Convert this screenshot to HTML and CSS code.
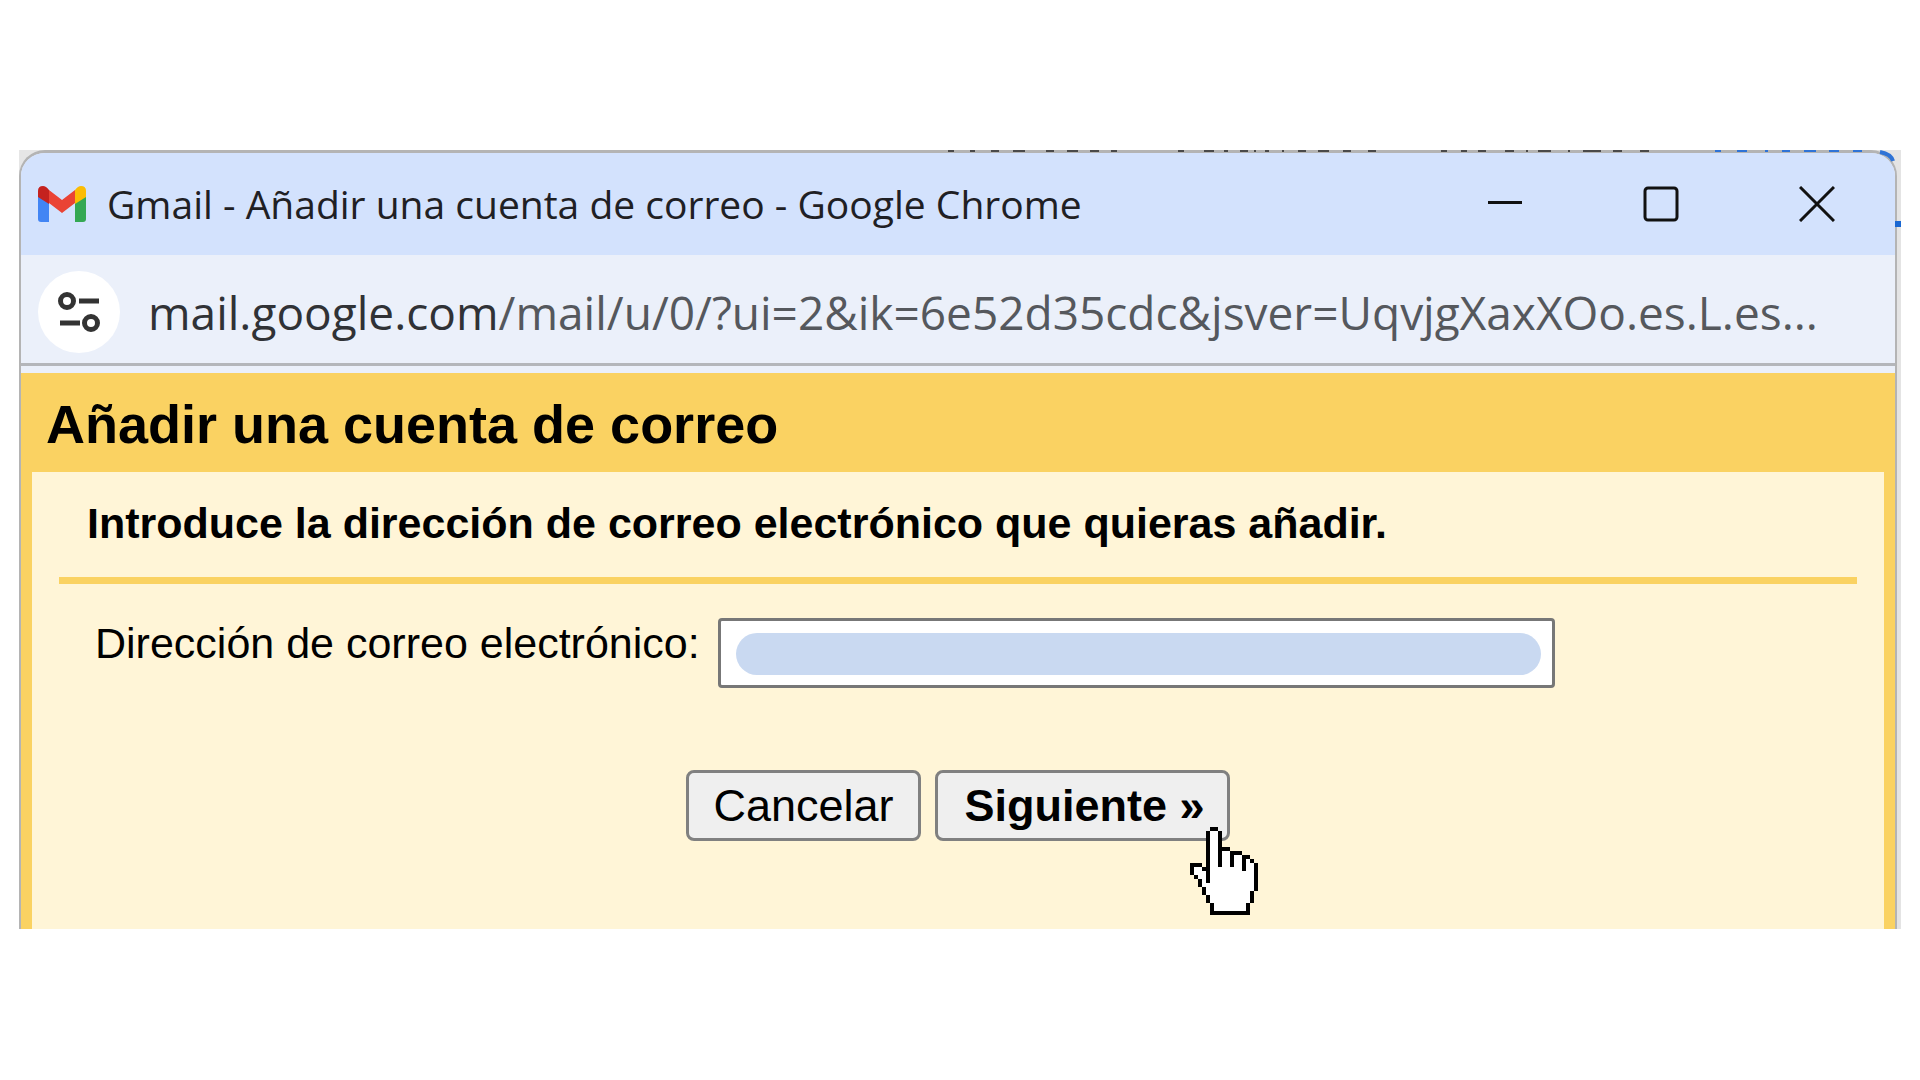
FILE: index.html
```html
<!DOCTYPE html>
<html lang="es">
<head>
<meta charset="utf-8">
<title>Gmail - Añadir una cuenta de correo</title>
<link rel="stylesheet" href="styles.css">
</head>
<body>
<div class="desktop">
  <section class="window">
    <header class="titlebar">
      <svg class="logo" viewBox="0 0 48 36" aria-hidden="true">
        <path fill="#4285f4" d="M0 9v24q0 3 3 3h8V16z"/>
        <path fill="#34a853" d="M48 9v24q0 3-3 3h-8V16z"/>
        <path fill="#ea4335" d="M11 4l13 10L37 4v13L24 27 11 17z"/>
        <path fill="#c5221f" d="M0 11V5q0-5 5-5 3 0 6 4v14z"/>
        <path fill="#fbbc04" d="M48 11V5q0-5-5-5-3 0-6 4v14z"/>
      </svg>
      <span class="caption">Gmail - Añadir una cuenta de correo - Google Chrome</span>
      <div class="controls">
        <button type="button" class="control" aria-label="Minimizar"><svg viewBox="0 0 36 36"><path d="M1 16.500h34"/></svg></button>
        <button type="button" class="control" aria-label="Maximizar"><svg viewBox="0 0 36 36"><rect x="2" y="2" width="32" height="32" rx="3"/></svg></button>
        <button type="button" class="control" aria-label="Cerrar"><svg viewBox="0 0 36 36"><path d="M1 1l34 34M35 1L1 35"/></svg></button>
      </div>
    </header>
    <div class="addressbar">
      <button type="button" class="site-info" aria-label="Información del sitio"><svg viewBox="0 0 44 42"><circle cx="10" cy="10" r="6.500"/><path d="M22 10h20M3 32h20"/><circle cx="34" cy="32" r="6.500"/></svg></button>
      <span class="url"><b>mail.google.com</b>/mail/u/0/?ui=2&amp;ik=6e52d35cdc&amp;jsver=UqvjgXaxXOo.es.L.es...</span>
    </div>
    <main class="page">
      <h1>Añadir una cuenta de correo</h1>
      <form class="panel">
        <h2>Introduce la dirección de correo electrónico que quieras añadir.</h2>
        <div class="field">
          <label for="email">Dirección de correo electrónico:</label>
          <div class="entry">
            <input id="email" type="text">
            <span class="redaction"></span>
          </div>
        </div>
        <div class="actions">
          <button type="button">Cancelar</button>
          <div class="next">
            <button type="submit">Siguiente »</button>
            <svg class="pointer" viewBox="0 0 17 22" shape-rendering="crispEdges" aria-hidden="true">
              <path fill="#fff" d="M5 1h2v5h3v1h3v1h2v1h1v7h-1v3h-1v2H6v-2H5v-2H4v-2H3v-2H2v-1H1v-2h2v1h2z"/>
              <path fill="#000" d="M5 0h2v1H5zM4 1h1v13H4zM7 1h1v9H7zM8 5h2v1H8zM10 6h3v1h-3zM10 7h1v3h-1zM13 7h2v1h-2zM13 8h1v3h-1zM15 8h1v1h-1zM16 9h1v7h-1zM15 16h1v3h-1zM14 19h1v3h-1zM5 21h10v1H5zM5 19h1v2H5zM4 17h1v2H4zM3 15h1v2H3zM2 13h1v2H2zM1 12h1v1H1zM0 9h3v1H0zM0 10h1v2H0zM3 10h1v1H3z"/>
            </svg>
          </div>
        </div>
      </form>
    </main>
  </section>
  <!-- Slivers of the settings page left uncovered along the popup's top and right edges -->
  <svg class="backdrop" viewBox="0 0 961 84" aria-hidden="true">
    <path stroke="#4a4a4a" stroke-width="2" d="M8 1h6M30 1h5M51 1h8M73 1h12M106 1h8M127 1h11M150 1h9M171 1h6M238 1h6M264 1h10M284 1h4M300 1h8M314 1h2M325 1h4M342 1h2M358 1h8M378 1h11M403 1h8M428 1h8M501 1h6M521 1h6M538 1h8M565 1h9M586 1h2M598 1h13M628 1h2M643 1h18M673 1h9M700 1h9"/>
    <path stroke="#2f73d6" stroke-width="2" d="M775 1h6M797 1h10M825 1h3M842 1h8M864 1h12M889 1h10M913 1h9"/>
    <path fill="none" stroke="#2f73d6" stroke-width="4" d="M940 2q11 2 13 9"/>
    <path stroke="#1967d2" stroke-width="6" d="M955 74h6"/>
  </svg>
</div>
</body>
</html>
```
FILE: styles.css
```css
* { box-sizing: border-box; }

body {
  margin: 0;
  padding: 150px 19px;
  background: #fff;
  color: #000;
  font-family: "Liberation Sans", Arial, sans-serif;
}

/* Strip of the Gmail settings page that shows behind the popup */
.desktop {
  position: relative;
  overflow: hidden;
  padding-right: 4px;
  background: linear-gradient(90deg, #e6e6e6 50%, #e4e4e4);
}

.backdrop {
  position: absolute;
  top: 0;
  right: 0;
  width: 961px;
  height: 84px;
  pointer-events: none;
}

.window {
  border: solid #b4b4b4;
  border-width: 3px 2px 0;
  border-radius: 26px 26px 0 0;
  overflow: hidden;
  background: #ebf0fa;
}

.titlebar {
  display: flex;
  align-items: center;
  height: 102px;
  padding: 0 60px 0 17px;
  background: #d3e2fd;
}

.logo { width: 48px; height: 36px; margin-right: 21px; }

.caption {
  flex: 1;
  color: #1f2024;
  font: 39px/52px "Open Sans", "Noto Sans", sans-serif;
  white-space: nowrap;
}

.controls { display: flex; gap: 120px; }

.control {
  width: 36px;
  height: 36px;
  padding: 0;
  border: 0;
  background: none;
}

.control svg { display: block; fill: none; stroke: #111; stroke-width: 3; }

.addressbar {
  display: flex;
  align-items: center;
  gap: 28px;
  height: 111px;
  padding: 6px 17px 0;
  border-bottom: 3px solid #b4b6ba;
}

.site-info {
  display: flex;
  flex: none;
  align-items: center;
  justify-content: center;
  width: 82px;
  height: 82px;
  padding: 0;
  border: 0;
  border-radius: 50%;
  background: #fff;
}

.site-info svg { width: 44px; height: 42px; fill: none; stroke: #333; stroke-width: 5; }

.url {
  color: #55585d;
  font: 46px/60px "Open Sans", "Noto Sans", sans-serif;
  white-space: nowrap;
}

.url b { color: #303236; font-weight: 400; }

.page {
  margin-top: 7px;
  padding: 0 11px;
  background: #fad262;
}

h1 {
  margin: 0;
  padding: 21px 14px 18px;
  font-size: 54px;
  line-height: 60px;
}

.panel {
  padding: 26px 27px 88px;
  background: #fff5d7;
}

h2 {
  margin: 0;
  padding: 0 28px 29px;
  border-bottom: 7px solid #fad262;
  font-size: 43px;
  line-height: 50px;
}

.field {
  display: flex;
  align-items: flex-start;
  gap: 18px;
  padding: 34px 36px 0;
  font-size: 43px;
  line-height: 50px;
}

.entry { position: relative; flex: 0 1 837px; }

.entry input {
  display: block;
  width: 100%;
  height: 70px;
  border: 3px solid #777;
  border-radius: 4px;
  background: #fff;
  font: inherit;
}

.redaction {
  position: absolute;
  inset: 15px 14px 13px 18px;
  border-radius: 21px;
  background: #c9d9f1;
}

.actions {
  display: flex;
  justify-content: center;
  gap: 14px;
  padding-top: 82px;
}

.actions button {
  height: 71px;
  padding: 0 24px;
  border: 3px solid #808080;
  border-radius: 8px;
  background: #efefef;
  color: #000;
  font: 45px/60px "Liberation Sans", Arial, sans-serif;
}

.next { position: relative; }

.next button { padding: 0 22px 0 27px; font-weight: 700; }

.pointer {
  position: absolute;
  left: 254px;
  top: 57px;
  width: 69px;
  height: 88px;
}
```
